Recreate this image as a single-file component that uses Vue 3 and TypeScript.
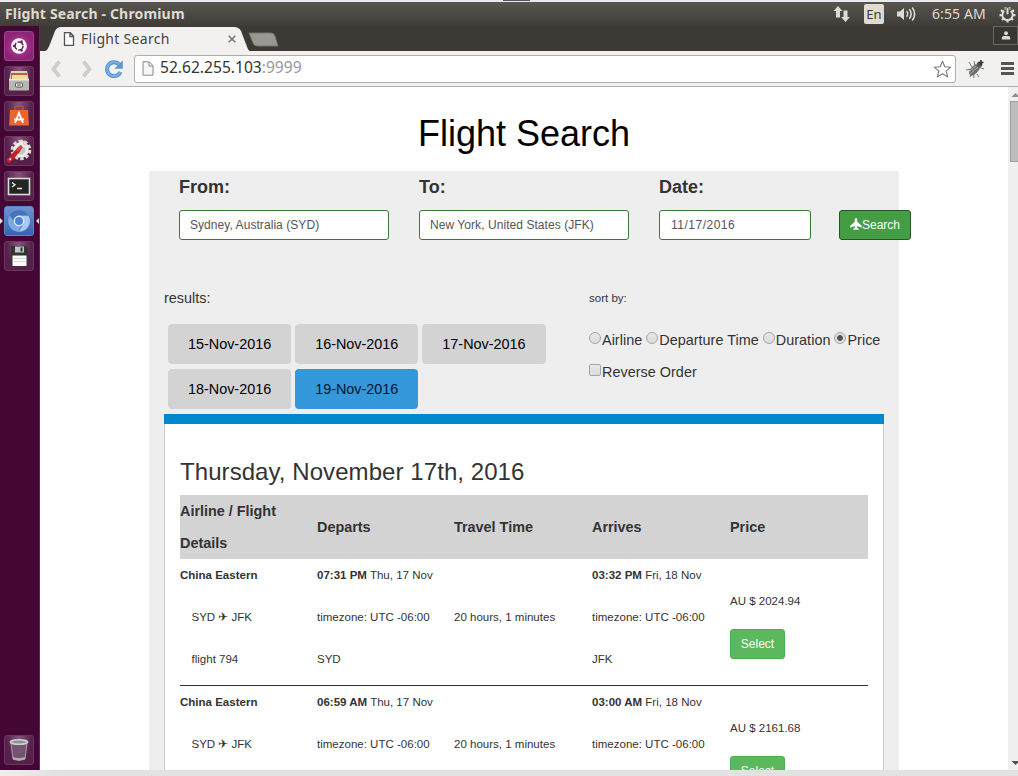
<script setup lang="ts">
interface Flight {
  airline: string
  route: string
  flight?: string
  departTime: string
  departDate: string
  travel: string
  arriveTime: string
  arriveDate: string
  zone: string
  from?: string
  to?: string
  price: string
}

const days: string[] = ['15-Nov-2016', '16-Nov-2016', '17-Nov-2016', '18-Nov-2016', '19-Nov-2016']
const activeDay = '19-Nov-2016'
const sorts: string[] = ['Airline', 'Departure Time', 'Duration', 'Price']
const activeSort = 'Price'
const columns: string[] = ['Airline / Flight Details', 'Departs', 'Travel Time', 'Arrives', 'Price']

const flights: Flight[] = [
  {
    airline: 'China Eastern', route: 'SYD ✈ JFK', flight: 'flight 794',
    departTime: '07:31 PM', departDate: 'Thu, 17 Nov', travel: '20 hours, 1 minutes',
    arriveTime: '03:32 PM', arriveDate: 'Fri, 18 Nov', zone: 'timezone: UTC -06:00',
    from: 'SYD', to: 'JFK', price: 'AU $ 2024.94',
  },
  {
    airline: 'China Eastern', route: 'SYD ✈ JFK',
    departTime: '06:59 AM', departDate: 'Thu, 17 Nov', travel: '20 hours, 1 minutes',
    arriveTime: '03:00 AM', arriveDate: 'Fri, 18 Nov', zone: 'timezone: UTC -06:00',
    price: 'AU $ 2161.68',
  },
]
</script>

<template>
  <div class="desktop">
    <div class="edge-top"><span class="edge-mark"></span></div>

    <header class="panel">
      <span class="panel-title">Flight Search - Chromium</span>
      <div class="indicators">
        <svg class="net" width="18" height="16" viewBox="0 0 18 16">
          <path d="M5 0 9.400 5H7v6.500H3V5H.6z M12.500 16 8.100 11h2.400V4.500h4V11h2.400z" fill="#dfdbd2" />
        </svg>
        <span class="lang">En</span>
        <svg class="vol" width="20" height="16" viewBox="0 0 20 16">
          <path d="M0 5.500h3L7 2v12L3 10.500H0z" fill="#dfdbd2" />
          <path d="M9.500 5.200a4 4 0 0 1 0 5.600M12.300 3.300a7 7 0 0 1 0 9.400M15.200 1.500a10 10 0 0 1 0 13" fill="none" stroke="#dfdbd2" stroke-width="1.600" />
        </svg>
        <span class="clock">6:55 AM</span>
        <svg class="gear" width="17" height="17" viewBox="0 0 17 17">
          <path d="M6.500 1.200 6.900 4M10.500 1.200 10.100 4M2 4.200 4.500 6M15 4.200 12.500 6M.5 9.200h3M13.500 9.200h3M3 14l2.200-2.200M14 14l-2.200-2.200M8.500 16.500v-3" stroke="#dfdbd2" stroke-width="2.200" />
          <path d="M5.200 4.900a5.200 5.200 0 1 0 6.600 0" fill="none" stroke="#dfdbd2" stroke-width="2" />
          <path d="M8.500 1.500v7" stroke="#4a4742" stroke-width="4" />
          <path d="M8.500 1.800v6.500" stroke="#dfdbd2" stroke-width="2" />
        </svg>
      </div>
    </header>

    <div class="workspace">
      <nav class="launcher">
        <div class="tile dash">
          <svg viewBox="0 0 30 30">
            <circle cx="15" cy="15" r="7.800" fill="#fff" />
            <circle cx="15" cy="15" r="4" fill="none" stroke="#6d1d5c" stroke-width="1.600" stroke-dasharray="7 1.400" />
            <circle cx="10" cy="15" r="1.200" fill="#6d1d5c" />
            <circle cx="17.600" cy="10.500" r="1.200" fill="#6d1d5c" />
            <circle cx="17.600" cy="19.500" r="1.200" fill="#6d1d5c" />
          </svg>
        </div>
        <div class="tile">
          <svg viewBox="0 0 30 30">
            <path d="M7 5h16l2 10H5z" fill="#d9d4c8" />
            <path d="M7 7h16v6H7z" fill="#c75f21" />
            <path d="M8 9h15v5H8z" fill="#f4d9a5" />
            <path d="M5 13h20v10.500q0 1-1 1H6q-1 0-1-1z" fill="#b9b7b1" />
            <path d="M5 13h20v1.500H5z" fill="#e8e6e0" />
            <rect x="11.500" y="17" width="7" height="4" rx="1" fill="#f1f1ef" stroke="#55534f" />
            <path d="M13 19h4" stroke="#55534f" />
          </svg>
        </div>
        <div class="tile">
          <svg viewBox="0 0 30 30">
            <path d="M11 10V7q0-2 2-2h4q2 0 2 2v3" fill="none" stroke="#c1511f" stroke-width="1.600" />
            <path d="M6 9h18l1 15.500H5z" fill="#ea6530" />
            <path d="M11 22l4-10 4 10M10 18.500h10" fill="none" stroke="#fff" stroke-width="1.800" />
          </svg>
        </div>
        <div class="tile">
          <svg viewBox="0 0 30 30">
            <circle cx="17" cy="14" r="8.800" fill="none" stroke="#dad8d5" stroke-width="3" stroke-dasharray="3.450 2.080" />
            <circle cx="17" cy="14" r="6.200" fill="#c8c6c4" stroke="#efedec" stroke-width="3" />
            <path d="M5 24.500 14.500 14" stroke="#c51f28" stroke-width="4.400" stroke-linecap="round" />
            <path d="M13 15 20 8" stroke="#d83a3e" stroke-width="3.200" />
            <path d="M19 4.500q-2 3 0 5t5-.5" fill="none" stroke="#f5e8e6" stroke-width="2.500" />
            <circle cx="6.300" cy="23.300" r="1" fill="#fff" />
          </svg>
        </div>
        <div class="tile">
          <svg viewBox="0 0 30 30">
            <rect x="4.500" y="7.500" width="21" height="16" fill="#252525" stroke="#d9d9d6" stroke-width="1.600" />
            <path d="m8 11.500 3 2.300-3 2.300M13 17.500h5" fill="none" stroke="#eee" stroke-width="1.300" />
          </svg>
        </div>
        <div class="tile browser">
          <span class="arrow-left"></span>
          <svg viewBox="0 0 30 30">
            <circle cx="15" cy="15" r="10.800" fill="#5a88cf" />
            <path d="M15 9.500h9.300A10.800 10.800 0 0 1 15 25.800l4.800-8z" fill="#a9c8f2" />
            <path d="M15 25.800A10.800 10.800 0 0 1 5.700 9.500l4.700 8q2 3 5.500 3z" fill="#7fa8e4" />
            <path d="M5.700 9.500A10.800 10.800 0 0 1 24.300 9.500H15q-4 0-5 4z" fill="#4374be" />
            <circle cx="15" cy="15" r="4.700" fill="#4d83d4" stroke="#dce9fb" stroke-width="1.500" />
          </svg>
          <span class="arrow-right"></span>
        </div>
        <div class="tile">
          <svg viewBox="0 0 30 30">
            <path d="M7 5h15l2 2v18H7z" fill="#343434" />
            <path d="M11 5.500h9v6h-9z" fill="#c4c5c5" />
            <path d="M16.500 6.500h2v4h-2z" fill="#333" />
            <path d="M8.500 14.500h14V25h-14z" fill="#fafafa" />
            <path d="M9.500 17.500h12M9.500 20.500h12" stroke="#cfcfcf" stroke-width=".8" />
          </svg>
        </div>
        <div class="tile trash">
          <svg viewBox="0 0 30 30">
            <path d="M7 7.500 9 24q6 2.500 12 0l2-16.500z" fill="#77607a" fill-opacity=".75" stroke="#a89ca8" />
            <ellipse cx="15" cy="7" rx="8.600" ry="2.300" fill="#8d9390" stroke="#ccd1ce" stroke-width="1.600" />
            <path d="M9 22q6 2 12 0v2.500q-6 2-12 0z" fill="#a7b1ab" />
          </svg>
        </div>
      </nav>

      <main class="window">
        <div class="tabstrip">
          <div class="tab">
            <svg class="tab-shape" width="212" height="26" viewBox="0 0 212 26">
              <path d="M0 26C7 26 8 23 10 18L15 5Q17 1 21 1H194Q199 1 201 5L206 18C208 23 208 25 212 26z" fill="#f2f1f0" />
            </svg>
            <div class="tab-content">
              <svg width="12" height="14" viewBox="0 0 12 14">
                <path d="M1.500.7h5.800l3.200 3.400v9.200h-9zM7 1v3.500h3.500" fill="#fff" stroke="#555" stroke-width="1.300" />
              </svg>
              <span class="tab-title">Flight Search</span>
              <svg class="tab-close" width="8" height="8" viewBox="0 0 8 8">
                <path d="m.7.7 6.600 6.600m0-6.600L.7 7.300" stroke="#777" stroke-width="1.600" />
              </svg>
            </div>
          </div>
          <svg class="newtab" width="31" height="15" viewBox="0 0 31 15">
            <path d="M1 1h22q3 0 4 3l3 10H9Q6 14 5 11z" fill="#9b9893" stroke="#77736e" />
          </svg>
          <div class="user">
            <svg width="10" height="9" viewBox="0 0 10 9">
              <circle cx="5" cy="2.200" r="2" fill="#ddd9d2" />
              <path d="M.8 8.500V7q0-2 2-2h4.400q2 0 2 2v1.500z" fill="#ddd9d2" />
            </svg>
          </div>
        </div>

        <div class="toolbar">
          <svg class="back" width="12" height="18" viewBox="0 0 12 18">
            <path d="M9.500 1.500 3.500 9l6 7.500" fill="none" stroke="#cfcdcb" stroke-width="3.800" />
          </svg>
          <svg class="forward" width="12" height="18" viewBox="0 0 12 18">
            <path d="M2.500 1.500 8.500 9l-6 7.500" fill="none" stroke="#cfcdcb" stroke-width="3.800" />
          </svg>
          <svg class="reload" width="18" height="18" viewBox="0 0 18 18">
            <path d="M14.300 4.500A7 7 0 1 0 15.500 12" fill="none" stroke="#4b88c8" stroke-width="4" />
            <path d="M17.800.3v8.500H9.300z" fill="#5d98d4" />
            <path d="M14.300 4.500A7 7 0 1 0 15.500 12" fill="none" stroke="#79afe3" stroke-width="2.300" />
          </svg>
          <div class="omnibox">
            <svg width="12" height="15" viewBox="0 0 12 15">
              <path d="M1 .8h6.300L11 4.600v9.600H1zM7 1v4h4" fill="#f7f7f7" stroke="#888" />
            </svg>
            <span class="url">52.62.255.103<span class="port">:9999</span></span>
            <svg class="star" width="19" height="18" viewBox="0 0 19 18">
              <path d="m9.500 1.200 2.300 5.500 6 .5-4.600 3.900 1.500 5.800-5.200-3.200-5.200 3.200 1.500-5.800L1.200 7.200l6-.5z" fill="#fff" stroke="#777" stroke-width="1.100" stroke-linejoin="round" />
            </svg>
          </div>
          <svg class="bug" width="20" height="20" viewBox="0 0 20 20">
            <path d="M4 3l3 5M1 11l6-1M5 18l2-6M9 19l-.500-5M12 15l2 3M13 8l6 2M10 7 9 2" fill="none" stroke="#777" />
            <path d="M4 14.500Q4 9 11 5l4 4q-3 6.500-9 8z" fill="#6d6f6e" />
            <path d="M5 15l8-7M5 12l6-5" stroke="#bbb" stroke-width=".8" />
            <circle cx="14.500" cy="5.500" r="2.800" fill="#555" />
            <path d="M16 1v5M13.500 3.500h5" stroke="#333" stroke-width="1.600" />
          </svg>
          <svg class="menu" width="13" height="13" viewBox="0 0 13 13">
            <path d="M0 1.500h13M0 6.500h13M0 11.500h13" stroke="#555" stroke-width="2.800" />
          </svg>
        </div>

        <div class="viewport">
          <div class="page">
            <h1>Flight Search</h1>
            <section class="search-area">
              <div class="form">
                <label class="field"><span>From:</span><span class="input">Sydney, Australia (SYD)</span></label>
                <label class="field"><span>To:</span><span class="input">New York, United States (JFK)</span></label>
                <label class="field date"><span>Date:</span><span class="input">11/17/2016</span></label>
                <button class="search">
                  <svg width="12" height="12" viewBox="0 0 12 12">
                    <path d="M6 0q1.200 0 1.200 1.700v2.100L11.700 7.700v2L7.200 8v1.900l1.500 1.100v1L6 11.600 3.300 12v-1l1.500-1.100V8L.3 9.700v-2L4.800 3.800V1.700Q4.800 0 6 0z" fill="#fff" />
                  </svg>Search
                </button>
              </div>

              <div class="filters">
                <div class="results">
                  <div class="results-label">results:</div>
                  <div class="days">
                    <button v-for="d in days" :key="d" class="day" :class="{ active: d === activeDay }">{{ d }}</button>
                  </div>
                </div>
                <div class="sorting">
                  <div class="sort-label">sort by:</div>
                  <div class="sort-row">
                    <span v-for="s in sorts" :key="s" class="option"><i class="radio" :class="{ on: s === activeSort }"></i>{{ s }}</span>
                  </div>
                  <div class="sort-row"><span class="option"><i class="check"></i>Reverse Order</span></div>
                </div>
              </div>

              <div class="bar"></div>
              <div class="card">
                <h2>Thursday, November 17th, 2016</h2>
                <div class="grid head">
                  <div v-for="c in columns" :key="c">{{ c }}</div>
                </div>
                <div v-for="f in flights" :key="f.price" class="grid row">
                  <div class="cell"><b>{{ f.airline }}</b><span class="indent">{{ f.route }}</span><span v-if="f.flight" class="indent">{{ f.flight }}</span></div>
                  <div class="cell"><span><b>{{ f.departTime }}</b> {{ f.departDate }}</span><span>{{ f.zone }}</span><span v-if="f.from">{{ f.from }}</span></div>
                  <div class="cell middle"><span>{{ f.travel }}</span></div>
                  <div class="cell"><span><b>{{ f.arriveTime }}</b> {{ f.arriveDate }}</span><span>{{ f.zone }}</span><span v-if="f.to">{{ f.to }}</span></div>
                  <div class="cost"><span>{{ f.price }}</span><button class="select">Select</button></div>
                </div>
              </div>
            </section>
          </div>
          <div class="scrollbar">
            <svg width="10" height="14" viewBox="0 0 10 14"><path d="M3.500 10 7.500 6l4 4z" fill="#8d8d8d" /></svg>
            <span class="thumb"></span>
            <svg class="down" width="10" height="14" viewBox="0 0 10 14"><path d="M3.500 5 7.500 9l4-4z" fill="#505050" /></svg>
          </div>
        </div>
      </main>
    </div>
    <div class="edge-bottom"></div>
  </div>
</template>

<style>
html,
body {
  margin: 0;
  overflow: hidden;
}
</style>

<style scoped>
* {
  box-sizing: border-box;
}
svg {
  display: block;
  flex: none;
}
.desktop {
  width: 1018px;
  height: 776px;
  display: flex;
  flex-direction: column;
  overflow: hidden;
  font-family: "Liberation Sans", Arial, sans-serif;
  color: #333;
}
.edge-top {
  height: 2px;
  flex: none;
  background: #e9eaed;
}
.edge-mark {
  display: block;
  width: 27px;
  height: 1px;
  margin-left: 503px;
  background: #555;
}
.edge-bottom {
  height: 6px;
  flex: none;
  background: linear-gradient(90deg, #eee, #e2e2e2 60px);
}
.panel {
  height: 24px;
  flex: none;
  display: flex;
  align-items: center;
  justify-content: space-between;
  background: linear-gradient(#595650, #403d39);
  color: #dfdbd2;
  font-family: "Noto Sans", "Open Sans", sans-serif;
  overflow: hidden;
}
.panel-title {
  padding-left: 5px;
  font-size: 14px;
  font-weight: 700;
  line-height: 22px;
  letter-spacing: 0.170px;
  white-space: nowrap;
}
.indicators {
  display: flex;
  align-items: center;
  width: 185px;
}
.lang {
  width: 20px;
  height: 20px;
  margin-left: 13px;
  border-radius: 2px;
  background: #dfdbd2;
  color: #3c3b37;
  font-size: 13px;
  line-height: 21px;
  text-align: center;
}
.vol {
  margin-left: 13px;
}
.clock {
  width: 54px;
  margin-left: 15px;
  font-size: 14px;
  line-height: 22px;
  margin-top: -1px;
  letter-spacing: 0.1px;
  white-space: nowrap;
}
.gear {
  margin-left: 13px;
}
.workspace {
  flex: 1;
  min-height: 0;
  display: flex;
}
.launcher {
  width: 40px;
  flex: none;
  display: flex;
  flex-direction: column;
  gap: 5px;
  padding: 5px 5px 5px 4px;
  border-right: 1px solid #70205c;
  background: #430635;
}
.tile {
  position: relative;
  width: 30px;
  height: 30px;
  flex: none;
  border-radius: 3px;
  border: 1px solid #6b385d;
  background: radial-gradient(ellipse at 50% 0, #88557b, #56204a 65%);
}
.tile svg {
  width: 30px;
  height: 30px;
  margin: -1px;
}
.tile.dash {
  border-color: #a83e8d;
  background: radial-gradient(circle, #c23ea6, #8b2577 70%);
}
.tile.browser {
  border-color: #5e83c6;
  background: linear-gradient(#6f93cf, #3763b1);
}
.tile.trash {
  margin-top: auto;
}
.arrow-left,
.arrow-right {
  position: absolute;
  top: 11px;
  border: 3px solid transparent;
}
.arrow-left {
  left: -5px;
  border-right-width: 0;
  border-left-color: #e5d9e2;
}
.arrow-right {
  right: -6px;
  border-left-width: 0;
  border-right-color: #e5d9e2;
}
.window {
  flex: 1;
  min-width: 0;
  display: flex;
  flex-direction: column;
}
.tabstrip {
  height: 25px;
  flex: none;
  display: flex;
  align-items: flex-start;
  background: #3d3935;
  font-family: "Noto Sans", "Open Sans", sans-serif;
}
.tab {
  width: 208px;
  height: 25px;
  position: relative;
}
.tab-shape {
  position: absolute;
  left: 0;
  top: 0;
}
.tab-content {
  position: relative;
  display: flex;
  align-items: center;
  height: 25px;
  padding-left: 23px;
}
.tab-title {
  width: 90px;
  margin-left: 6px;
  font-size: 14px;
  letter-spacing: 0.300px;
  color: #444;
  white-space: nowrap;
}
.tab-close {
  margin-left: 57px;
}
.newtab {
  margin-top: 6px;
}
.user {
  width: 25px;
  height: 19px;
  margin-left: auto;
  display: flex;
  align-items: center;
  justify-content: center;
  border: 1px solid #6a6762;
  background: #393631;
}
.toolbar {
  height: 36px;
  flex: none;
  display: flex;
  align-items: center;
  padding-left: 10px;
  background: #f2f1f0;
  border-bottom: 1px solid #b2b0ae;
}
.forward {
  margin-left: 19px;
}
.reload {
  margin-left: 12px;
}
.omnibox {
  width: 822px;
  height: 28px;
  margin-left: 11px;
  display: flex;
  align-items: center;
  padding: 0 3px 0 7px;
  border: 1px solid #b0aeac;
  border-radius: 3px;
  background: #fff;
  font-family: "Noto Sans", "Open Sans", sans-serif;
}
.url {
  margin: -3px 0 0 6px;
  font-size: 15.600px;
  line-height: 24px;
  color: #333;
  white-space: nowrap;
}
.port {
  color: #999;
}
.star {
  margin-left: auto;
}
.bug {
  margin-left: 9px;
}
.menu {
  margin-left: 16px;
}
.viewport {
  flex: 1;
  min-height: 0;
  display: flex;
  overflow: hidden;
  background: #fff;
}
.page {
  flex: 1;
  height: 683px;
  overflow: hidden;
}
.scrollbar {
  width: 10px;
  display: flex;
  flex-direction: column;
  background: #f0f0f0;
}
.thumb {
  width: 10px;
  height: 61px;
  margin-left: 2px;
  border: 1px solid #a0a0a0;
  background: #bcbcbc;
}
.down {
  margin-top: auto;
}
h1 {
  margin: 0;
  padding-top: 27px;
  height: 84px;
  font-size: 36px;
  font-weight: 400;
  line-height: 40px;
  color: #000;
  text-align: center;
}
.search-area {
  width: 750px;
  margin: 0 auto;
  padding: 0 15px;
  background: #eee;
}
.form {
  display: flex;
  padding-left: 15px;
  height: 111px;
}
.field {
  width: 210px;
  flex: none;
  margin-right: 30px;
  display: flex;
  flex-direction: column;
  font-size: 18px;
  font-weight: 700;
  line-height: 32px;
}
.input {
  height: 30px;
  margin-top: 7px;
  padding-left: 10px;
  border: 1px solid #3c763d;
  border-radius: 3px;
  background: #fff;
  color: #555;
  font-size: 12px;
  font-weight: 400;
  line-height: 28px;
  letter-spacing: 0.060px;
  white-space: nowrap;
}
.date {
  width: 152px;
  margin-right: 28px;
}
.date .input {
  padding-left: 11px;
  letter-spacing: 0.5px;
}
button {
  font-family: inherit;
  padding: 0;
  flex: none;
}
.search {
  width: 72px;
  height: 30px;
  margin-top: 39px;
  display: flex;
  align-items: center;
  justify-content: center;
  border: 1px solid #255625;
  border-radius: 3px;
  background: #449d44;
  color: #fff;
  font-size: 12px;
}
.search svg {
  margin-top: -2px;
}
.filters {
  display: flex;
  height: 132px;
  font-size: 14.400px;
}
.results {
  width: 425px;
}
.results-label,
.sort-label {
  height: 32px;
  line-height: 32px;
}
.sort-label {
  margin-bottom: 10px;
  font-size: 11.520px;
}
.days {
  display: flex;
  flex-wrap: wrap;
  gap: 5px 4px;
  width: 400px;
  margin: 10px 0 0 4px;
}
.day {
  width: 123.200px;
  height: 40px;
  border: 0;
  border-radius: 4px;
  background: #d3d3d4;
  color: #000;
  font-size: 14.400px;
}
.day.active {
  background: #3498db;
  color: #00152b;
}
.sort-row {
  display: flex;
  gap: 4px;
  line-height: 32px;
  letter-spacing: 0.030px;
  white-space: nowrap;
}
.option {
  display: flex;
}
.radio,
.check {
  width: 12px;
  height: 12px;
  margin: 8px 1px 0 0;
  border: 1px solid #a5a5a5;
  background: linear-gradient(#e8e8e8, #dcdcdc);
}
.radio {
  border-radius: 50%;
}
.check {
  border-radius: 2px;
}
.radio.on {
  background: radial-gradient(circle, #555 0 2.500px, #e0e0e0 3.300px);
}
.bar {
  height: 10px;
  background: #0088cc;
}
.card {
  padding: 31px 15px 0;
  border: solid #ccc;
  border-width: 0 1px;
  background: #fff;
}
h2 {
  margin: 0;
  height: 40px;
  font-size: 24px;
  font-weight: 400;
  line-height: 34px;
  letter-spacing: 0.070px;
}
.grid {
  display: grid;
  grid-template-columns: 137px 137px 138px 138px 138px;
}
.head {
  height: 64px;
  align-items: center;
  background: #d3d3d3;
  font-size: 14.400px;
  font-weight: 700;
  line-height: 32px;
}
.row {
  height: 127px;
  border-bottom: 1px solid #333;
  font-size: 11.520px;
  line-height: 32px;
  white-space: nowrap;
}
.cell {
  display: flex;
  flex-direction: column;
  gap: 10px;
}
.middle {
  padding-top: 42px;
}
.indent {
  padding-left: 11.500px;
}
.cost {
  display: flex;
  flex-direction: column;
  align-items: flex-start;
  padding-top: 26px;
}
.select {
  width: 55px;
  height: 30px;
  margin-top: 12px;
  border: 1px solid #4cae4c;
  border-radius: 3px;
  background: #5cb85c;
  color: #fff;
  font-size: 12px;
}
</style>
